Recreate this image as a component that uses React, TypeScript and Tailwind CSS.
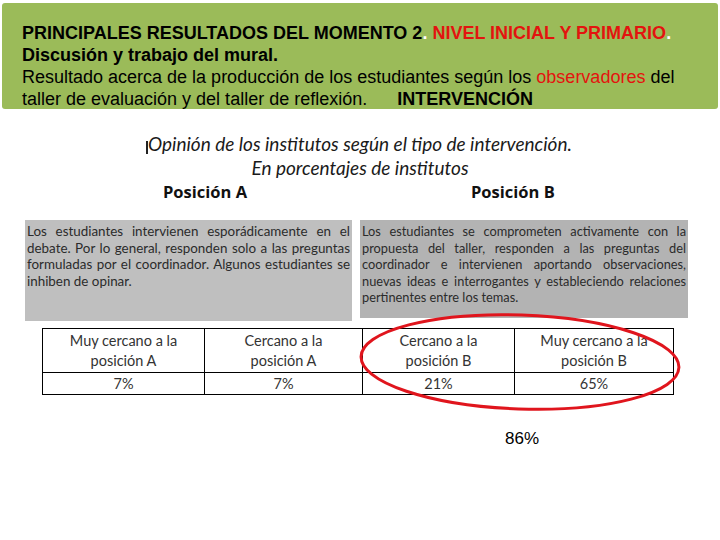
import React from 'react';

const rows = [
  { label: ['Muy cercano a la', 'posición A'], value: '7%', w: 'w-[162px]' },
  { label: ['Cercano a la', 'posición A'], value: '7%', w: 'w-[158px]' },
  { label: ['Cercano a la', 'posición B'], value: '21%', w: 'w-[152px]' },
  { label: ['Muy cercano a la', 'posición B'], value: '65%', w: 'w-[159px]' },
];

const leftLines = [
  'Los estudiantes intervienen esporádicamente en el',
  'debate. Por lo general, responden solo a las preguntas',
  'formuladas por el coordinador. Algunos estudiantes se',
  'inhiben de opinar.',
];

const rightLines = [
  'Los estudiantes se comprometen activamente con la',
  'propuesta del taller, responden a las preguntas del',
  'coordinador e intervienen aportando observaciones,',
  'nuevas ideas e interrogantes y estableciendo relaciones',
  'pertinentes entre los temas.',
];

export default function App() {
  return (
    <div className="relative h-[540px] w-[720px] overflow-hidden bg-white">
      <Banner />

      <div
        className="mt-[23px] text-center text-[19px] italic leading-[24px] text-[#1a1a1a]"
        style={{ fontFamily: 'Lato, "Open Sans", sans-serif' }}
      >
        <div>
          <span className="relative">
            <span className="absolute left-[-2px] top-[9px] h-[13px] w-[1.5px] bg-[#222]" />
            Opinión de los institutos según el tipo de intervención.
          </span>
        </div>
        <div>En porcentajes de institutos</div>
      </div>

      <div
        className="flex text-[16.5px] font-bold leading-[24px] text-[#111]"
        style={{ fontFamily: '"Open Sans", Lato, sans-serif' }}
      >
        <span className="ml-[163px] w-[308px]">Posición A</span>
        <span>Posición B</span>
      </div>

      <div
        className="mt-[16px] flex gap-[8px] pl-[25px] text-[#2b2b2b]"
        style={{ fontFamily: 'Lato, "Open Sans", sans-serif' }}
      >
        <Box lines={leftLines} className="h-[101px] w-[327px] bg-[#bfbfbf] text-[13.4px]" />
        <Box lines={rightLines} className="h-[98px] w-[328px] bg-[#b3b3b3] text-[12.8px]" />
      </div>

      <div className="relative mt-[7px] pl-[42px]">
        <table
          className="border-collapse text-center text-[14.5px] leading-[20px] text-[#333]"
          style={{ fontFamily: 'Lato, "Open Sans", sans-serif' }}
        >
          <tbody>
            <tr>
              {rows.map((r) => (
                <td key={r.label.join()} className={`${r.w} h-[44px] border-[1.5px] border-black p-0`}>
                  <div>{r.label[0]}</div>
                  <div>{r.label[1]}</div>
                </td>
              ))}
            </tr>
            <tr>
              {rows.map((r) => (
                <td key={r.label.join()} className="h-[22px] border-[1.5px] border-black p-0">
                  {r.value}
                </td>
              ))}
            </tr>
          </tbody>
        </table>

        <svg className="absolute left-[355px] top-[-16px]" width="335" height="106" viewBox="0 0 335 106">
          <ellipse
            cx="165"
            cy="50"
            rx="159"
            ry="47"
            fill="none"
            stroke="#e0151d"
            strokeWidth="3"
            transform="rotate(2 165 50)"
          />
        </svg>
      </div>

      <div
        className="mt-[34px] pl-[505px] text-[17px] leading-[20px] text-black"
        style={{ fontFamily: '"Liberation Sans", Arial, sans-serif' }}
      >
        86%
      </div>
    </div>
  );
}

function Box({ lines, className }: { lines: string[]; className: string }) {
  return (
    <div className={`px-[2px] pt-[3px] leading-[16.6px] ${className}`}>
      {lines.map((l, i) => (
        <div
          key={l}
          className={i < lines.length - 1 ? 'text-justify [text-align-last:justify]' : 'text-left'}
        >
          {l}
        </div>
      ))}
    </div>
  );
}

function Banner() {
  return (
    <div
      className="mx-[2px] mt-[3px] h-[106px] rounded-[3px] bg-[#9bbb59] pl-[20px] pt-[19px] text-[18px] leading-[22px] text-black"
      style={{ fontFamily: '"Liberation Sans", Arial, sans-serif' }}
    >
      <div className="font-bold">
        PRINCIPALES RESULTADOS DEL MOMENTO 2<span className="text-white">.</span>{' '}
        <span className="text-[#e3140f]">NIVEL INICIAL Y PRIMARIO</span>
        <span className="text-white">.</span>
      </div>
      <div className="font-bold">Discusión y trabajo del mural.</div>
      <div>
        Resultado acerca de la producción de los estudiantes según los{' '}
        <span className="text-[#e3140f]">observadores</span> del
      </div>
      <div>
        taller de evaluación y del taller de reflexión.<span className="ml-[30px] font-bold">INTERVENCIÓN</span>
      </div>
    </div>
  );
}
